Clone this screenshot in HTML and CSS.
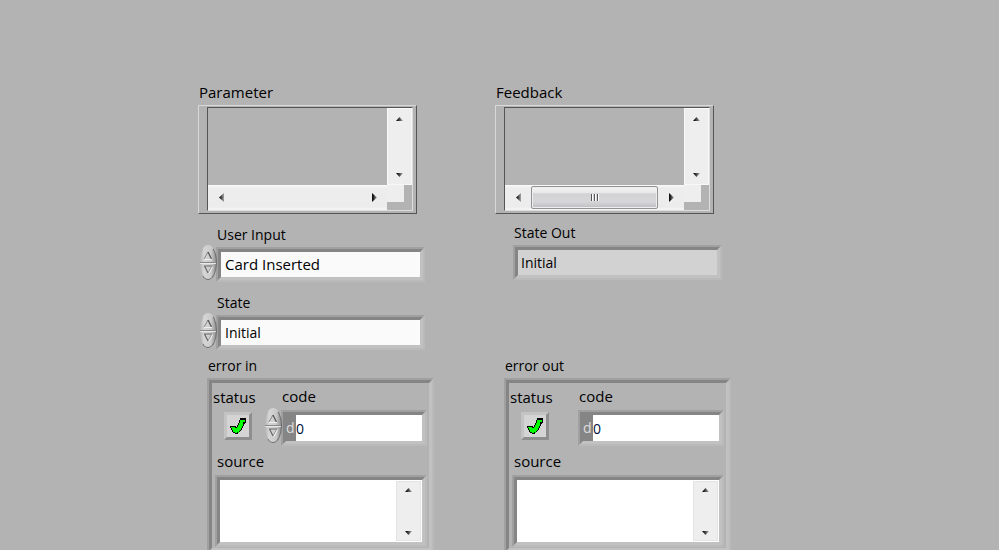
FILE: index.html
```html
<!DOCTYPE html>
<html lang="en">
<head>
<meta charset="utf-8">
<title>State machine</title>
<link rel="stylesheet" href="styles.css">
</head>
<body>
<svg class="defs" aria-hidden="true">
  <defs>
    <linearGradient id="fade" x1="0" y1="0" x2="1" y2="0"><stop offset="0.2" stop-color="#111"/><stop offset="1" stop-color="#aaa"/></linearGradient>
    <symbol id="up" viewBox="0 0 7 4"><path d="M0 4L3.5 0L7 4Z" fill="url(#fade)"/></symbol>
    <symbol id="down" viewBox="0 0 7 4"><path d="M0 0H7L3.5 4Z" fill="url(#fade)"/></symbol>
    <symbol id="left" viewBox="0 0 5 9"><path d="M5 0V9L0 4.5Z" fill="url(#fade)"/></symbol>
    <symbol id="right" viewBox="0 0 5 9"><path d="M0 0L5 4.5L0 9Z" fill="url(#fade)"/></symbol>
    <symbol id="inc" viewBox="0 0 10 9"><path d="M1 8L5 1" fill="none" stroke="#888" stroke-width="1"/><path d="M5 1L8.500 8" fill="none" stroke="#555" stroke-width="1.200"/><path d="M1 8.500H9" stroke="#eee"/></symbol>
    <symbol id="dec" viewBox="0 0 10 9"><path d="M1 1H9M1.500 1L5 8" fill="none" stroke="#666" stroke-width="1.200"/><path d="M8.500 1.500L5 8" stroke="#999"/><path d="M9.500 2L6 8.500" stroke="#f4f4f4"/></symbol>
    <symbol id="check" viewBox="0 0 16 17"><path d="M10.500 1.500H15.500V5.500L13.500 7.500L12.500 10.500L10.500 13.500L8.500 15.500L6.500 16.500L3.500 15.500L1.500 12.500L0.500 9.500H4.500L6.500 10.500L8.500 7.500L9.500 4.500Z" fill="#0f0" stroke="#000" stroke-width="1" shape-rendering="crispEdges"/><path d="M11 1H15V3H11ZM13 7H15V5H13Z" fill="#000" shape-rendering="crispEdges"/></symbol>
  </defs>
</svg>
<main class="panel">
  <section class="column inputs">
    <h2 class="label wide">Parameter</h2>
    <div class="list">
      <div class="list-view">
        <div class="list-body"></div>
        <div class="vscroll">
          <button aria-label="Scroll up"><svg class="v"><use href="#up"/></svg></button>
          <button aria-label="Scroll down"><svg class="v"><use href="#down"/></svg></button>
        </div>
        <div class="hscroll">
          <button aria-label="Scroll left"><svg class="h"><use href="#left"/></svg></button>
          <span class="track"></span>
          <button aria-label="Scroll right"><svg class="h"><use href="#right"/></svg></button>
        </div>
        <div class="corner"></div>
      </div>
    </div>
    <div class="field">
      <label class="label" for="user-input">User Input</label>
      <div class="control">
        <div class="spinner"><button aria-label="Next input"><svg><use href="#inc"/></svg></button><button aria-label="Previous input"><svg><use href="#dec"/></svg></button></div>
        <div class="bevel"><div class="well"><select id="user-input" class="wide"><option>Card Inserted</option></select></div></div>
      </div>
    </div>
    <div class="field">
      <label class="label" for="state">State</label>
      <div class="control">
        <div class="spinner"><button aria-label="Next state"><svg><use href="#inc"/></svg></button><button aria-label="Previous state"><svg><use href="#dec"/></svg></button></div>
        <div class="bevel"><div class="well"><select id="state"><option>Initial</option></select></div></div>
      </div>
    </div>
    <section class="cluster">
      <h2 class="label">error in</h2>
      <div class="bevel"><div class="well cluster-body">
        <div class="row">
          <div class="status">
            <label class="label wide" for="status-in">status</label>
            <div class="led"><input id="status-in" type="checkbox" checked><svg><use href="#check"/></svg></div>
          </div>
          <div class="code">
            <label class="label wide" for="code-in">code</label>
            <div class="control">
              <div class="spinner"><button aria-label="Increase code"><svg><use href="#inc"/></svg></button><button aria-label="Decrease code"><svg><use href="#dec"/></svg></button></div>
              <div class="bevel"><div class="well number"><span class="radix">d</span><input id="code-in" type="text" value="0"></div></div>
            </div>
          </div>
        </div>
        <div class="source">
          <label class="label wide" for="source-in">source</label>
          <div class="bevel"><div class="well text">
            <textarea id="source-in"></textarea>
            <div class="vscroll">
              <button aria-label="Scroll up"><svg class="v"><use href="#up"/></svg></button>
              <button aria-label="Scroll down"><svg class="v"><use href="#down"/></svg></button>
            </div>
          </div></div>
        </div>
      </div></div>
    </section>
  </section>

  <section class="column outputs">
    <h2 class="label wide">Feedback</h2>
    <div class="list">
      <div class="list-view">
        <div class="list-body"></div>
        <div class="vscroll">
          <button aria-label="Scroll up"><svg class="v"><use href="#up"/></svg></button>
          <button aria-label="Scroll down"><svg class="v"><use href="#down"/></svg></button>
        </div>
        <div class="hscroll">
          <button aria-label="Scroll left"><svg class="h"><use href="#left"/></svg></button>
          <span class="track thumb"><i></i><i></i><i></i></span>
          <button aria-label="Scroll right"><svg class="h"><use href="#right"/></svg></button>
        </div>
        <div class="corner"></div>
      </div>
    </div>
    <div class="field">
      <label class="label" for="state-out">State Out</label>
      <div class="control">
        <div class="bevel"><div class="well"><output id="state-out">Initial</output></div></div>
      </div>
    </div>
    <section class="cluster">
      <h2 class="label">error out</h2>
      <div class="bevel"><div class="well cluster-body">
        <div class="row">
          <div class="status">
            <label class="label wide" for="status-out">status</label>
            <div class="led"><input id="status-out" type="checkbox" checked><svg><use href="#check"/></svg></div>
          </div>
          <div class="code">
            <label class="label wide" for="code-out">code</label>
            <div class="control">
              <div class="bevel"><div class="well number"><span class="radix">d</span><input id="code-out" type="text" value="0" readonly></div></div>
            </div>
          </div>
        </div>
        <div class="source">
          <label class="label wide" for="source-out">source</label>
          <div class="bevel"><div class="well text">
            <textarea id="source-out" readonly></textarea>
            <div class="vscroll">
              <button aria-label="Scroll up"><svg class="v"><use href="#up"/></svg></button>
              <button aria-label="Scroll down"><svg class="v"><use href="#down"/></svg></button>
            </div>
          </div></div>
        </div>
      </div></div>
    </section>
  </section>
</main>
</body>
</html>
```
FILE: styles.css
```css
* { box-sizing: border-box; }

body {
  margin: 0;
  height: 100vh;
  overflow: hidden;
  background: #b3b3b3;
  color: #000;
  font: 14px/20px "Open Sans", "Noto Sans", sans-serif;
}

.defs { position: absolute; width: 0; height: 0; }
svg { display: block; }

button, input, select, textarea {
  appearance: none;
  margin: 0;
  padding: 0;
  border: 0;
  border-radius: 0;
  background: none;
  color: inherit;
  font: inherit;
}

.panel {
  display: grid;
  grid-template-columns: 1fr 1fr;
  column-gap: 61px;
  padding: 82px 268px 0 198px;
}

.column { display: flex; flex-direction: column; min-width: 0; }

.label { display: block; margin: 0; font-size: 14px; font-weight: 400; line-height: 20px; white-space: nowrap; }
.wide { font-size: 15px; }

/* Scrolling lists */
.list {
  margin: 3px 17px 0 0;
  padding: 1px 3px 2px 8px;
  border: 1px solid #d8d8d8;
  border-right: 1px solid #555;
  border-bottom: 1px solid #555;
}
.column > .label { padding-left: 1px; }
.list-view {
  display: grid;
  grid-template: 77px 25px / 1fr 25px;
  border: 1px solid #555;
  border-right-color: #ddd;
  border-bottom-color: #ddd;
}
.vscroll {
  display: flex;
  flex-direction: column;
  justify-content: space-between;
  width: 25px;
  padding: 2px 0;
  background: #eee;
  border: 1px solid #f8f8f8;
  border-left-color: #fafafa;
}
.vscroll button { display: grid; place-items: center; height: 15px; }
.hscroll {
  display: flex;
  background: linear-gradient(#fafafa, #ededed 12%, #ececec 88%, #f6f6f6);
}
.hscroll button { display: grid; place-items: center; width: 26px; }
.v { width: 7px; height: 4px; }
.h { width: 5px; height: 9px; }
.track { flex: 1; }
.thumb {
  display: flex;
  align-items: center;
  justify-content: center;
  gap: 1px;
  margin: 1px 0;
  border: 1px solid #929296;
  border-radius: 2px;
  background: linear-gradient(#f4f4f4, #e8e8e8 28%, #d2d2d5 32%, #d6d6d9 70%, #bebec2);
  box-shadow: inset 0 0 0 1px #eee;
}
.thumb i { width: 2px; height: 7px; border-left: 1px solid #555; border-right: 1px solid #fff; }
.corner { width: 17px; height: 17px; background: #eee; }

/* Recessed frames */
.bevel {
  flex: 1;
  min-width: 0;
  border: 2px solid;
  border-color: #a0a0a0 #bababa #bababa #a0a0a0;
}
.well {
  border: 3px solid;
  border-color: #858585 #c1c1c1 #c1c1c1 #858585;
}

.field { margin-top: 11px; }
.field .label { padding-left: 19px; }
.control { display: flex; }
.field .control { margin: 2px 9px 0 18px; }
.field select, .field output {
  display: block;
  width: 100%;
  height: 25px;
  padding: 0 4px;
  background: #fafafa;
  line-height: 25px;
}
.field output { padding: 0 3px; background: #d2d2d2; }

.spinner {
  position: relative;
  display: flex;
  flex-direction: column;
  flex: none;
  width: 18px;
  height: 35px;
  margin: -2px -1px 0 -17px;
  overflow: hidden;
  border: 1px solid;
  border-color: #d0d0d0 #6c6c6c #6c6c6c #b4b4b4;
  border-radius: 50%;
  background: linear-gradient(90deg, #b4b4b4, #d6d6d6 25%, #cacaca 70%, #909090);
}
.spinner button { flex: 1; display: grid; place-items: center; }
.spinner button:first-child { border-bottom: 1px solid #888; padding-top: 4px; }
.spinner button:last-child { border-top: 1px solid #e8e8e8; padding-bottom: 4px; }
.spinner svg { width: 10px; height: 9px; }

/* Error clusters */
.cluster { margin: 6px 0 0 9px; }
.cluster > .label { padding-left: 1px; }
.cluster > .bevel { margin-top: 2px; }
.cluster-body { padding: 3px 2px 1px 3px; }
.row { display: flex; }
.status { width: 66px; padding-top: 1px; }
.status .label { margin-left: -2px; }
.led {
  position: relative;
  width: 28px;
  height: 28px;
  margin: 5px 0 0 9px;
}
.led input {
  display: block;
  width: 28px;
  height: 28px;
  border: 3px solid;
  border-color: #c3c3c3 #8e8e8e #8e8e8e #c3c3c3;
  background: #d4d4d4;
}
.led svg { position: absolute; left: 6px; top: 5px; width: 16px; height: 17px; pointer-events: none; }
.code { flex: 1; min-width: 0; }
.code .label { padding-left: 1px; }
.code .control { margin-top: 4px; }
.number { display: flex; background: #fff; }
.radix { width: 10px; background: #858585; color: #ddd; line-height: 26px; }
.number input { flex: 1; min-width: 0; width: 0; height: 26px; color: #001040; }
.source { margin-top: 5px; }
.source .label { padding-left: 2px; }
.source .bevel { margin-top: 4px; }
.text { display: flex; height: 68px; padding: 1px; background: #fff; }
.text textarea { flex: 1; min-width: 0; resize: none; }
.text .vscroll { border-color: #e4e4e4; padding: 0; }

/* Indicator column */
.outputs .field { margin-top: 9px; }
.outputs .cluster { margin-top: 76px; }
```
